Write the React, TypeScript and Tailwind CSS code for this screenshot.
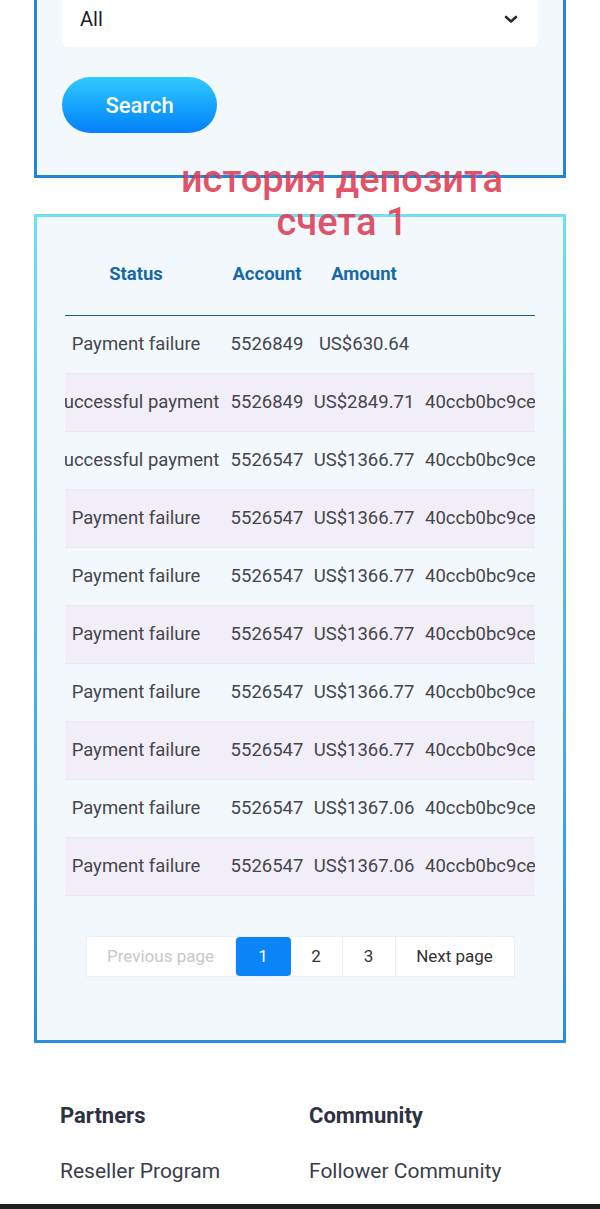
import { FC } from 'react'

interface Deposit {
    status: string
    account: string
    amount: string
    order: string
}

const rows: Deposit[] = [
    { status: 'Payment failure', account: '5526849', amount: 'US$630.64', order: '' },
    { status: 'Successful payment', account: '5526849', amount: 'US$2849.71', order: '40ccb0bc9ce4a1f2' },
    { status: 'Successful payment', account: '5526547', amount: 'US$1366.77', order: '40ccb0bc9ce4a1f2' },
    { status: 'Payment failure', account: '5526547', amount: 'US$1366.77', order: '40ccb0bc9ce4a1f2' },
    { status: 'Payment failure', account: '5526547', amount: 'US$1366.77', order: '40ccb0bc9ce4a1f2' },
    { status: 'Payment failure', account: '5526547', amount: 'US$1366.77', order: '40ccb0bc9ce4a1f2' },
    { status: 'Payment failure', account: '5526547', amount: 'US$1366.77', order: '40ccb0bc9ce4a1f2' },
    { status: 'Payment failure', account: '5526547', amount: 'US$1366.77', order: '40ccb0bc9ce4a1f2' },
    { status: 'Payment failure', account: '5526547', amount: 'US$1367.06', order: '40ccb0bc9ce4a1f2' },
    { status: 'Payment failure', account: '5526547', amount: 'US$1367.06', order: '40ccb0bc9ce4a1f2' },
]

const cols = 'grid grid-cols-[142px_120px_74px_1fr]'

const App: FC = () => {
    return (
        <div className="relative w-[600px] h-[1209px] overflow-hidden bg-white font-['Roboto',sans-serif] flex flex-col">
            {/* search form */}
            <div className="mx-[34px] mt-[-40px] border-[3px] border-[#2484dc] bg-[#f3f8fd] px-[25px] pt-[28px] pb-[42px]">
                <div className="h-[56px] rounded-md bg-white flex items-center justify-between pl-[18px] pr-[20px]">
                    <span className="text-[20px] text-[#1c1c24]">All</span>
                    <svg width="14" height="9" viewBox="0 0 14 9" fill="none" stroke="#2c2c34" strokeWidth="2.6" strokeLinecap="round" strokeLinejoin="round">
                        <polyline points="2,2 7,6.5 12,2" />
                    </svg>
                </div>
                <button className="mt-[30px] h-[56px] w-[155px] rounded-full bg-gradient-to-b from-[#31cafc] to-[#087ffa] text-white text-[22px] font-medium">
                    Search
                </button>
            </div>

            {/* history table */}
            <div className="mx-[34px] mt-[36px] p-[3px] bg-gradient-to-b from-[#6fe0f4] to-[#2a8ce0]">
                <div className="bg-[#f3f8fd] px-[28px] pt-[18px] pb-[63px]">
                    <div className="overflow-hidden">
                        <div className={`${cols} h-[81px] items-center border-b border-[#1f5f7c] text-[18.5px] font-bold text-[#1668a9]`}>
                            <div className="text-center">Status</div>
                            <div className="text-center">Account</div>
                            <div className="text-center">Amount</div>
                            <div />
                        </div>
                        {rows.map((row, i) => (
                            <div
                                key={i}
                                className={`${cols} h-[58px] items-center border-b border-[#e8e6f0] text-[18.5px] text-[#45464d] whitespace-nowrap ${i % 2 === 1 ? 'bg-[#f2eef8]' : ''}`}
                            >
                                <div className="flex justify-center">{row.status}</div>
                                <div className="flex justify-center">{row.account}</div>
                                <div className="flex justify-center">{row.amount}</div>
                                <div className="pl-[24px]">{row.order}</div>
                            </div>
                        ))}
                    </div>

                    <div className="mt-[40px] flex justify-center">
                        <div className="flex h-[41px] bg-white text-[17px] border border-[#eeeeee]">
                            <div className="w-[149px] flex items-center justify-center text-[#c8c8c8] border-r border-[#eeeeee]">Previous page</div>
                            <div className="w-[55px] flex items-center justify-center bg-[#0a84f8] text-white rounded-sm">1</div>
                            <div className="w-[52px] flex items-center justify-center text-[#333] border-r border-[#eeeeee]">2</div>
                            <div className="w-[53px] flex items-center justify-center text-[#333] border-r border-[#eeeeee]">3</div>
                            <div className="w-[118px] flex items-center justify-center text-[#333]">Next page</div>
                        </div>
                    </div>
                </div>
            </div>

            {/* footer links */}
            <div className="grid grid-cols-[249px_1fr] pl-[60px] pt-[56px]">
                <div>
                    <div className="text-[22px] font-bold text-[#2e3142]">Partners</div>
                    <div className="mt-[24px] text-[21px] text-[#3a3d4a]">Reseller Program</div>
                </div>
                <div>
                    <div className="text-[22px] font-bold text-[#2e3142]">Community</div>
                    <div className="mt-[24px] text-[21px] text-[#3a3d4a]">Follower Community</div>
                </div>
            </div>
            <div className="mt-auto h-[5px] bg-[#1f1f21]" />

            {/* annotation */}
            <div className="absolute left-[142px] top-[158px] w-[400px] text-center text-[38px] leading-[43px] font-medium text-[#dc3b55]/90">
                история депозита
                <br />
                счета 1
            </div>
        </div>
    )
}

export default App
